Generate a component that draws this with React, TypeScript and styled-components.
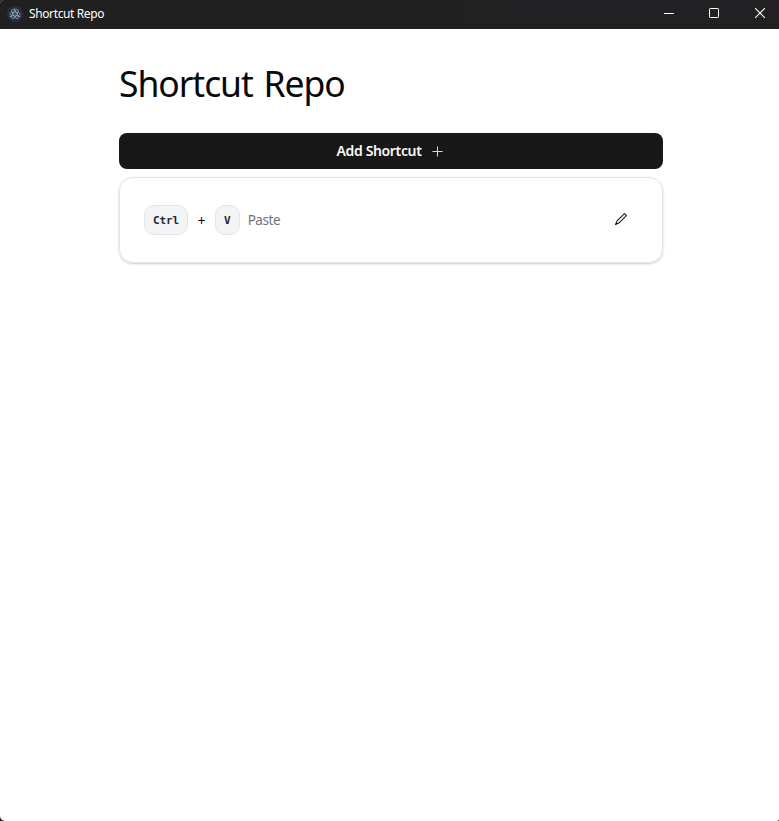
import React from 'react';
import styled, { createGlobalStyle } from 'styled-components';
import { RxPencil1, RxPlus } from 'react-icons/rx';

const GlobalStyle = createGlobalStyle`
  *, *::before, *::after { box-sizing: border-box; }
  body {
    margin: 0;
    background: #1b1b1b;
    font-family: 'Segoe UI', 'Noto Sans', sans-serif;
    overflow: hidden;
  }
`;

const Window = styled.div`
  display: flex;
  flex-direction: column;
  height: 100vh;
  overflow: hidden;
  border-radius: 4px 0 2px 5px;
  background: #fff;
`;

const TitleBar = styled.header`
  display: flex;
  align-items: center;
  flex: none;
  height: 29px;
  padding-left: 7px;
  background: linear-gradient(90deg, #202020, #222023);
  color: #fff;

  > svg { margin-bottom: 2px; }
`;

const WindowTitle = styled.span`
  flex: 1;
  margin-left: 6px;
  padding-bottom: 2px;
  font-size: 12px;
  line-height: 16px;
  letter-spacing: -0.38px;
  white-space: nowrap;
`;

const WindowButton = styled.button`
  display: flex;
  align-items: center;
  justify-content: center;
  width: 45.5px;
  height: 29px;
  padding: 0 0 3px 7px;
  border: 0;
  background: none;
  color: #fff;
`;

const Page = styled.main`
  display: flex;
  flex-direction: column;
  width: 544px;
  margin: 32px 0 0 119px;
`;

const Heading = styled.h1`
  height: 40px;
  margin: 0 0 32px;
  padding-top: 2px;
  font-size: 35.5px;
  line-height: 40px;
  font-weight: 400;
  letter-spacing: -1.05px;
  word-spacing: 2.5px;
  white-space: nowrap;
  color: #09090b;
`;

const AddButton = styled.button`
  display: flex;
  align-items: center;
  justify-content: center;
  gap: 8px;
  height: 36px;
  padding: 0 1px 0 0;
  border: 0;
  border-radius: 8px;
  background: #181818;
  color: #fafafa;
  font: 600 14px/20px 'Segoe UI', 'Noto Sans', sans-serif;
  letter-spacing: -0.35px;

  svg { opacity: 0.85; }
`;

const Card = styled.section`
  display: flex;
  align-items: center;
  height: 86px;
  margin-top: 8px;
  padding: 0 24px;
  border: 1px solid #e4e4e7;
  border-radius: 14px;
  box-shadow: 0 1px 3px rgba(0, 0, 0, 0.1), 0 1px 2px rgba(0, 0, 0, 0.1);
`;

const Key = styled.kbd`
  height: 30px;
  padding: 6px 8px;
  border: 1px solid #e2e4e9;
  border-radius: 10px;
  background: #f3f4f6;
  color: #1e2939;
  font: 700 11px/17px Consolas, 'DejaVu Sans Mono', monospace;
  letter-spacing: -0.1px;
`;

const Joiner = styled.span`
  width: 27px;
  padding-top: 2px;
  font-size: 14px;
  line-height: 20px;
  text-align: center;
  color: #09090b;
`;

const Description = styled.span`
  flex: 1;
  margin-left: 8px;
  font-size: 13.5px;
  line-height: 20px;
  letter-spacing: -0.45px;
  color: #71717a;
`;

const EditButton = styled.button`
  display: flex;
  align-items: center;
  justify-content: center;
  width: 36px;
  height: 36px;
  padding: 0 0 1px;
  border: 0;
  background: none;
  color: #09090b;
`;

const AppLogo = () => (
  <svg width="16" height="16" viewBox="0 0 16 16" fill="none">
    <circle cx="8" cy="8" r="8" fill="#2b2e3b" />
    <g stroke="#8fb5c1" strokeWidth=".7">
      <ellipse cx="8" cy="8" rx="5.2" ry="2" />
      <ellipse cx="8" cy="8" rx="5.2" ry="2" transform="rotate(60 8 8)" />
      <ellipse cx="8" cy="8" rx="5.2" ry="2" transform="rotate(120 8 8)" />
    </g>
    <g fill="#9fc5d0">
      <circle cx="8" cy="8" r=".6" />
      <circle cx="3.6" cy="10.4" r=".7" />
      <circle cx="12.4" cy="10.4" r=".7" />
      <circle cx="8" cy="3" r=".6" />
    </g>
  </svg>
);

const App: React.FC = () => (
  <>
    <GlobalStyle />
    <Window>
      <TitleBar>
        <AppLogo />
        <WindowTitle>Shortcut Repo</WindowTitle>
        <WindowButton aria-label="Minimize">
          <svg width="10" height="10" fill="currentColor"><path d="M0 5h10v1H0z" /></svg>
        </WindowButton>
        <WindowButton aria-label="Maximize">
          <svg width="10" height="10" fill="none" stroke="currentColor"><rect x=".5" y=".5" width="9" height="9" rx=".7" /></svg>
        </WindowButton>
        <WindowButton aria-label="Close">
          <svg width="10" height="10" stroke="currentColor" strokeWidth="1.1"><path d="M0 0l10 10M10 0L0 10" /></svg>
        </WindowButton>
      </TitleBar>
      <Page>
        <Heading>Shortcut Repo</Heading>
        <AddButton>
          Add Shortcut
          <RxPlus size={15} />
        </AddButton>
        <Card>
          <Key>Ctrl</Key>
          <Joiner>+</Joiner>
          <Key>V</Key>
          <Description>Paste</Description>
          <EditButton aria-label="Edit shortcut">
            <RxPencil1 size={15} />
          </EditButton>
        </Card>
      </Page>
    </Window>
  </>
);

export default App;
